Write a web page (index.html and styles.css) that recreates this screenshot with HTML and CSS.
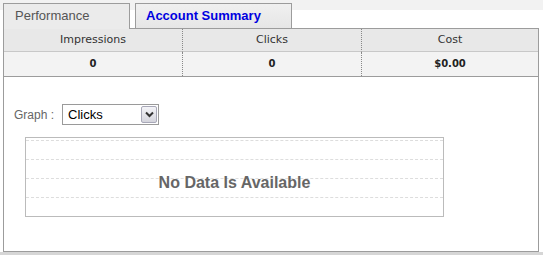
FILE: index.html
```html
<!DOCTYPE html>
<html lang="en">
<head>
    <meta charset="UTF-8">
    <title>Performance</title>
    <link rel="stylesheet" href="styles.css">
</head>
<body>
<div class="page">
    <ul class="tabs">
        <li class="tab active">Performance</li>
        <li class="tab link">Account Summary</li>
    </ul>
    <div class="panel">
        <div class="stats">
            <div class="cell head">Impressions</div>
            <div class="cell head">Clicks</div>
            <div class="cell head last">Cost</div>
            <div class="cell val">0</div>
            <div class="cell val">0</div>
            <div class="cell val last">$0.00</div>
        </div>
        <div class="graph">
            <div class="graph-row">
                <span class="label">Graph :</span>
                <div class="select">
                    <span class="select-text">Clicks</span>
                    <span class="select-btn">
                        <svg width="9" height="7" viewBox="0 0 9 7"><path d="M1 1.5 L4.5 5 L8 1.5" fill="none" stroke="#333" stroke-width="2"/></svg>
                    </span>
                </div>
            </div>
            <div class="chart">
                <div class="chart-line"></div>
                <div class="chart-line"></div>
                <div class="chart-line"></div>
                <div class="chart-line"></div>
                <div class="nodata">No Data Is Available</div>
            </div>
        </div>
    </div>
</div>
</body>
</html>
```

FILE: styles.css
```css
*{
    margin: 0px;
    padding: 0px;
    list-style: none;
    box-sizing: border-box;
}
body{
    background: #d6d6d6;
    font-family: "Liberation Sans", Arial, sans-serif;
}
.page{
    width: 543px;
    height: 252px;
    background: linear-gradient(#f2f2f2 10px, #fff 10px);
    padding: 3px 4px 0 3px;
}
.tabs{
    display: flex;
    gap: 5px;
    height: 25px;
    position: relative;
    z-index: 1;
}
.tab{
    height: 26px;
    border: 1px solid #9c9c9c;
    font-size: 13px;
    line-height: 24px;
    background: #ebebeb;
}
.active{
    width: 127px;
    border-bottom: none;
    color: #555;
    padding-left: 11px;
}
.link{
    width: 157px;
    height: 26px;
    color: #0000e0;
    font-weight: bold;
    padding-left: 10px;
    background: linear-gradient(#f0f0f0, #e6e6e6);
}
.panel{
    height: 224px;
    border: 1px solid #9c9c9c;
    background: #fff;
}
.stats{
    display: grid;
    grid-template-columns: 179px 179px 1fr;
    border-bottom: 1px solid #9c9c9c;
    font-family: "DejaVu Sans", Verdana, sans-serif;
    font-size: 11px;
    color: #333;
}
.cell{
    text-align: center;
    border-right: 1px dotted #888;
}
.cell.last{
    border-right: none;
}
.head{
    height: 23px;
    line-height: 22px;
    background: #e8e8e8;
    border-bottom: 1px solid #c8c8c8;
}
.val{
    height: 24px;
    line-height: 23px;
    background: #f3f3f3;
    font-size: 10px;
    font-weight: bold;
    color: #222;
}
.graph{
    padding: 27px 0 0 10px;
}
.graph-row{
    display: flex;
    align-items: center;
    gap: 8px;
    height: 21px;
}
.label{
    font-size: 12px;
    color: #666;
}
.select{
    width: 97px;
    height: 21px;
    border: 1px solid #9a9a9a;
    display: flex;
    align-items: center;
    justify-content: space-between;
    padding: 0 1px 0 5px;
    font-size: 13px;
    color: #000;
}
.select-btn{
    width: 16px;
    height: 17px;
    border: 1px solid #a8a8b8;
    border-radius: 2px;
    background: linear-gradient(#f4f4f8, #d4d4dc);
    display: flex;
    align-items: center;
    justify-content: center;
}
.chart{
    position: relative;
    width: 419px;
    height: 80px;
    margin: 12px 0 0 11px;
    border: 1px solid #bbb;
    padding-top: 2px;
    display: flex;
    flex-direction: column;
    gap: 18px;
}
.chart-line{
    border-top: 1px dashed #ddd;
}
.nodata{
    position: absolute;
    left: 0;
    right: 0;
    top: 36px;
    text-align: center;
    font-size: 16px;
    font-weight: bold;
    color: #666;
}
```
